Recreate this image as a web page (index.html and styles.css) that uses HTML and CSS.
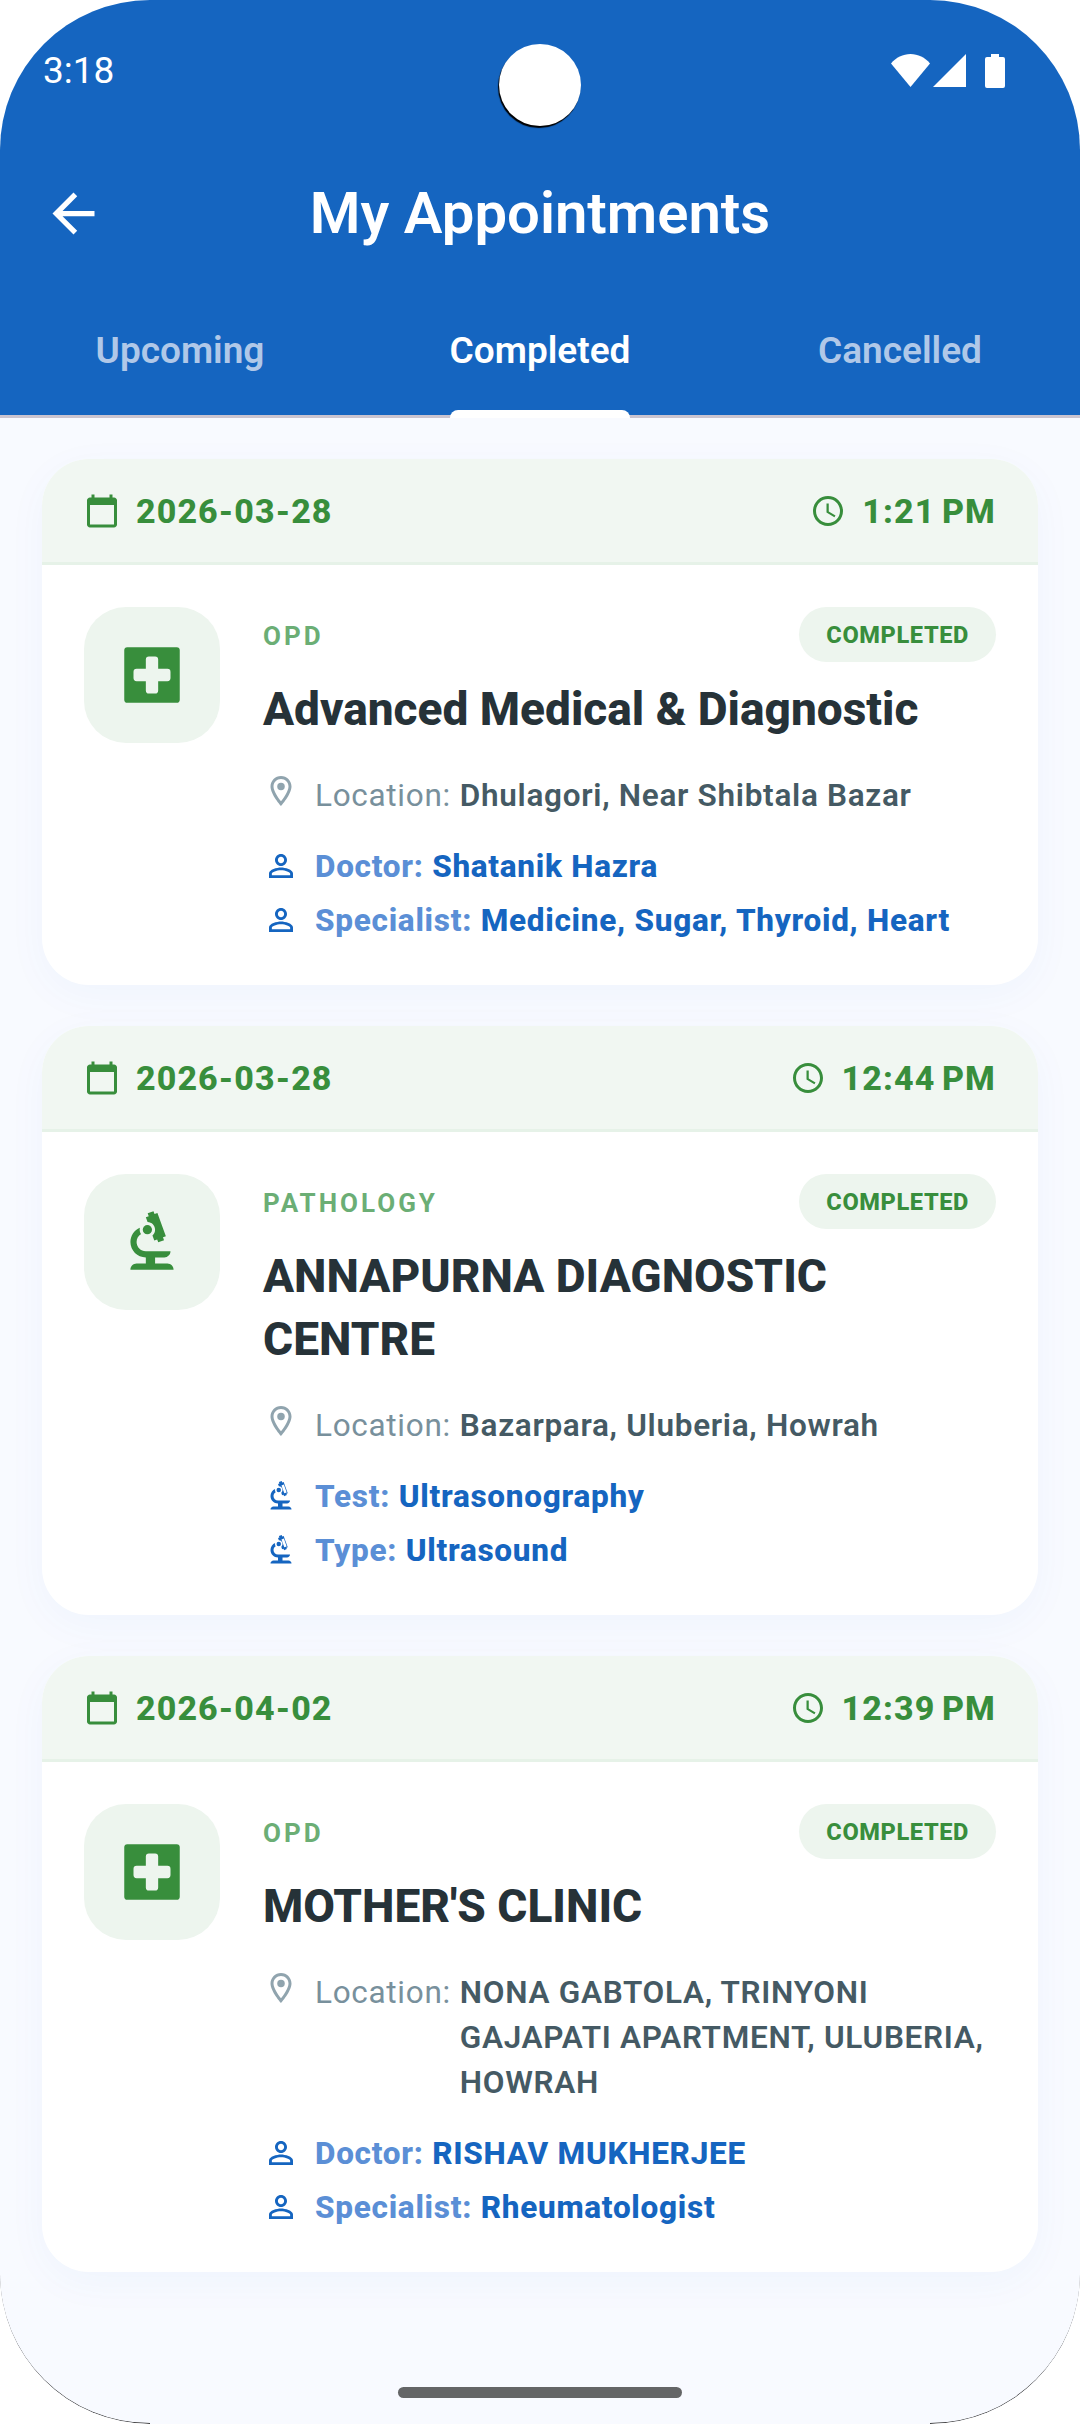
FILE: index.html
```html
<!DOCTYPE html>
<html>
<head>
  <meta http-equiv="Content-type" content="text/html; charset=utf-8">
  <title>My Appointments</title>
  <link rel="stylesheet" href="styles.css">
</head>
<body>
  <svg class="defs" width="0" height="0">
    <symbol id="i_calendar" viewBox="0 0 24 24"><path d="M20 3h-1V1h-2v2H7V1H5v2H4c-1.1 0-2 .9-2 2v16c0 1.1.9 2 2 2h16c1.1 0 2-.9 2-2V5c0-1.1-.9-2-2-2zm0 18H4V8h16v13z"/></symbol>
    <symbol id="i_clock" viewBox="0 0 24 24"><path d="M11.99 2C6.47 2 2 6.48 2 12s4.47 10 9.99 10C17.52 22 22 17.52 22 12S17.52 2 11.99 2zM12 20c-4.42 0-8-3.58-8-8s3.58-8 8-8 8 3.58 8 8-3.58 8-8 8z"/><path d="M12.5 7H11v6l5.25 3.15.75-1.23-4.5-2.67z"/></symbol>
    <symbol id="i_pin" viewBox="0 0 24 24"><path d="M12 2C8.13 2 5 5.13 5 9c0 5.25 7 13 7 13s7-7.75 7-13c0-3.87-3.13-7-7-7zM7 9c0-2.76 2.24-5 5-5s5 2.24 5 5c0 2.88-2.88 7.19-5 9.88C9.92 16.21 7 11.85 7 9z"/><circle cx="12" cy="9" r="2.5"/></symbol>
    <symbol id="i_person" viewBox="0 0 24 24"><path d="M12 5.9c1.16 0 2.1.94 2.1 2.1s-.94 2.1-2.1 2.1S9.9 9.16 9.9 8s.94-2.1 2.1-2.1m0 9c2.97 0 6.1 1.46 6.1 2.1v1.1H5.9V17c0-.64 3.13-2.1 6.1-2.1M12 4C9.79 4 8 5.79 8 8s1.79 4 4 4 4-1.79 4-4-1.79-4-4-4zm0 9c-2.67 0-8 1.34-8 4v3h16v-3c0-2.66-5.33-4-8-4z"/></symbol>
    <symbol id="i_hospital" viewBox="0 0 24 24"><path fill-rule="evenodd" d="M4 3h16a1 1 0 0 1 1 1v16a1 1 0 0 1-1 1H4a1 1 0 0 1-1-1V4a1 1 0 0 1 1-1zm7 3a1 1 0 0 0-1 1v3H7a1 1 0 0 0-1 1v2a1 1 0 0 0 1 1h3v3a1 1 0 0 0 1 1h2a1 1 0 0 0 1-1v-3h3a1 1 0 0 0 1-1v-2a1 1 0 0 0-1-1h-3V7a1 1 0 0 0-1-1z"/></symbol>
    <symbol id="i_biotech" viewBox="0 0 24 24"><path d="M7 19c-1.1 0-2 .9-2 2h14c0-1.1-.9-2-2-2h-4v-2h3c1.1 0 2-.9 2-2h-8c-1.66 0-3-1.34-3-3 0-1.09.59-2.04 1.46-2.56C8.17 9.03 8 8.54 8 8c0-.21.04-.42.09-.62C6.28 8.13 5 9.92 5 12c0 2.76 2.24 5 5 5v2H7z"/><path d="M10.56 5.51C11.91 5.54 13 6.64 13 8c0 .75-.33 1.41-.85 1.87l.59 1.62.94-.34.34.94 1.88-.68-.34-.94.94-.34-2.74-7.52-.94.34-.34-.94-1.88.68.34.94-.94.35.56 1.53z"/><circle cx="10.5" cy="8" r="1.5"/></symbol>
    <symbol id="i_biotech_line" viewBox="0 0 24 24"><path d="M7 19c-1.1 0-2 .9-2 2h14c0-1.1-.9-2-2-2h-4v-2h3c1.1 0 2-.9 2-2h-8c-1.66 0-3-1.34-3-3 0-1.09.59-2.04 1.46-2.56C8.17 9.03 8 8.54 8 8c0-.21.04-.42.09-.62C6.28 8.13 5 9.92 5 12c0 2.76 2.24 5 5 5v2H7z"/><path fill-rule="evenodd" d="M10.56 5.51C11.91 5.54 13 6.64 13 8c0 .75-.33 1.41-.85 1.87l.59 1.62.94-.34.34.94 1.88-.68-.34-.94.94-.34-2.74-7.52-.94.34-.34-.94-1.88.68.34.94-.94.35.56 1.53zM12.3 5l1.6-.6 1.9 5.2-1.6.6z"/><circle cx="10.5" cy="8" r="1.5"/></symbol>
  </svg>

  <div class="screen">
    <header class="appbar">
      <div class="status_bar">
        <span class="clock">3:18</span>
        <div class="status_icons">
          <svg class="wifi" viewBox="0 0 39 33"><path d="M0 9.500C5 3.500 12 0 19.500 0S34 3.500 39 9.500L19.500 33z"/></svg>
          <svg class="signal" viewBox="0 0 33 33"><path d="M33 0v33H0z"/></svg>
          <svg class="battery" viewBox="0 0 20 34"><path d="M6 0h8v3h4a2 2 0 0 1 2 2v27a2 2 0 0 1-2 2H2a2 2 0 0 1-2-2V5a2 2 0 0 1 2-2h4z"/></svg>
        </div>
      </div>
      <div class="camera"></div>
      <div class="toolbar">
        <svg class="back" viewBox="0 0 24 24"><path d="M20 11H7.830l5.590-5.590L12 4l-8 8 8 8 1.410-1.410L7.830 13H20v-2z"/></svg>
        <h1>My Appointments</h1>
      </div>
      <nav class="tabs">
        <div class="tab"><span class="tab_label">Upcoming</span></div>
        <div class="tab active"><span class="tab_label">Completed</span></div>
        <div class="tab"><span class="tab_label">Cancelled</span></div>
      </nav>
    </header>

    <main class="list">
      <section class="card">
        <div class="card_head">
          <div class="when"><svg class="ico"><use href="#i_calendar"/></svg>2026-03-28</div>
          <div class="when"><svg class="ico"><use href="#i_clock"/></svg>1:21 PM</div>
        </div>
        <div class="card_body">
          <div class="tile"><svg class="tile_ico"><use href="#i_hospital"/></svg></div>
          <div class="info">
            <div class="info_top">
              <span class="kind">OPD</span>
              <span class="badge">COMPLETED</span>
            </div>
            <h2>Advanced Medical &amp; Diagnostic</h2>
            <div class="loc">
              <svg class="ico"><use href="#i_pin"/></svg>
              <span class="loc_label">Location:</span>
              <span class="loc_value">Dhulagori, Near Shibtala Bazar</span>
            </div>
            <div class="line"><svg class="ico"><use href="#i_person"/></svg><span class="line_label">Doctor:</span> Shatanik Hazra</div>
            <div class="line"><svg class="ico"><use href="#i_person"/></svg><span class="line_label">Specialist:</span> Medicine, Sugar, Thyroid, Heart</div>
          </div>
        </div>
      </section>

      <section class="card">
        <div class="card_head">
          <div class="when"><svg class="ico"><use href="#i_calendar"/></svg>2026-03-28</div>
          <div class="when"><svg class="ico"><use href="#i_clock"/></svg>12:44 PM</div>
        </div>
        <div class="card_body">
          <div class="tile"><svg class="tile_ico"><use href="#i_biotech"/></svg></div>
          <div class="info">
            <div class="info_top">
              <span class="kind">PATHOLOGY</span>
              <span class="badge">COMPLETED</span>
            </div>
            <h2>ANNAPURNA DIAGNOSTIC CENTRE</h2>
            <div class="loc">
              <svg class="ico"><use href="#i_pin"/></svg>
              <span class="loc_label">Location:</span>
              <span class="loc_value">Bazarpara, Uluberia, Howrah</span>
            </div>
            <div class="line"><svg class="ico"><use href="#i_biotech_line"/></svg><span class="line_label">Test:</span> Ultrasonography</div>
            <div class="line"><svg class="ico"><use href="#i_biotech_line"/></svg><span class="line_label">Type:</span> Ultrasound</div>
          </div>
        </div>
      </section>

      <section class="card">
        <div class="card_head">
          <div class="when"><svg class="ico"><use href="#i_calendar"/></svg>2026-04-02</div>
          <div class="when"><svg class="ico"><use href="#i_clock"/></svg>12:39 PM</div>
        </div>
        <div class="card_body">
          <div class="tile"><svg class="tile_ico"><use href="#i_hospital"/></svg></div>
          <div class="info">
            <div class="info_top">
              <span class="kind">OPD</span>
              <span class="badge">COMPLETED</span>
            </div>
            <h2>MOTHER'S CLINIC</h2>
            <div class="loc">
              <svg class="ico"><use href="#i_pin"/></svg>
              <span class="loc_label">Location:</span>
              <span class="loc_value">NONA GABTOLA, TRINYONI GAJAPATI APARTMENT, ULUBERIA, HOWRAH</span>
            </div>
            <div class="line"><svg class="ico"><use href="#i_person"/></svg><span class="line_label">Doctor:</span> RISHAV MUKHERJEE</div>
            <div class="line"><svg class="ico"><use href="#i_person"/></svg><span class="line_label">Specialist:</span> Rheumatologist</div>
          </div>
        </div>
      </section>
    </main>

    <div class="home_pill"></div>
  </div>
</body>
</html>
```

FILE: styles.css
```css
* {
  box-sizing: border-box;
}
html, body {
  margin: 0;
  background-color: #fff;
}
body {
  font-family: Roboto, "Noto Sans", sans-serif;
}
.defs {
  position: absolute;
}
.screen {
  position: relative;
  width: 1080px;
  height: 2424px;
  overflow: hidden;
  background-color: #f8faff;
  border-radius: 150px;
}
/* thin dark edge on the two bottom corners */
.screen::before,
.screen::after {
  content: "";
  position: absolute;
  bottom: 0;
  width: 150px;
  height: 150px;
  border-bottom: 1px solid rgba(0, 0, 0, 0.8);
}
.screen::before {
  left: 0;
  border-bottom-left-radius: 150px;
}
.screen::after {
  right: 0;
  border-bottom-right-radius: 150px;
}

/* header */
.appbar {
  position: relative;
  background-color: #1565c0;
  border-bottom: 3px solid #cac4d0;
  color: #fff;
}
.status_bar {
  display: flex;
  align-items: center;
  justify-content: space-between;
  height: 141px;
  padding: 0 75px 0 43px;
}
.clock {
  font-size: 37px;
}
.status_icons {
  display: flex;
  align-items: center;
  gap: 3px;
}
.status_icons svg {
  display: block;
  fill: #fff;
}
.wifi {
  width: 39px;
  height: 33px;
}
.signal {
  width: 33px;
  height: 33px;
}
.battery {
  width: 20px;
  height: 34px;
  margin-left: 16px;
}
.camera {
  position: absolute;
  left: 499px;
  top: 44px;
  width: 82px;
  height: 82px;
  border-radius: 50%;
  background-color: #fff;
  box-shadow: -1px 2px 1px #000;
}
.toolbar {
  position: relative;
  display: flex;
  align-items: center;
  justify-content: center;
  height: 144px;
}
.back {
  position: absolute;
  left: 42px;
  top: 41px;
  width: 63px;
  height: 63px;
  fill: #fff;
}
h1 {
  margin: 0;
  font-size: 58px;
  font-weight: 600;
}
.tabs {
  display: flex;
  height: 130px;
}
.tab {
  flex: 1;
  display: flex;
  justify-content: center;
  font-size: 37px;
  font-weight: 600;
  color: #b0c8e8;
}
.tab_label {
  position: relative;
  display: flex;
  align-items: center;
  height: 130px;
}
.tab.active {
  color: #fff;
}
.tab.active .tab_label::after {
  content: "";
  position: absolute;
  left: 0;
  right: 0;
  bottom: -3px;
  height: 8px;
  background-color: #fff;
  border-radius: 8px 8px 0 0;
}

/* cards */
.list {
  display: flex;
  flex-direction: column;
  gap: 41px;
  padding: 41px 42px 0;
}
.card {
  background-color: #fff;
  border-radius: 47px;
  overflow: hidden;
  box-shadow: 0 10px 42px rgba(21, 101, 192, 0.04);
}
.card_head {
  display: flex;
  align-items: center;
  justify-content: space-between;
  height: 106px;
  padding: 0 42px;
  background-color: #f1f7f2;
  border-bottom: 3px solid #e6f2e8;
}
.when {
  display: flex;
  align-items: center;
  gap: 16px;
  font-size: 34px;
  font-weight: 800;
  letter-spacing: 1.1px;
  word-spacing: -3px;
  color: #388e3c;
}
.ico {
  flex: none;
  width: 36px;
  height: 36px;
  fill: currentColor;
}
.card_body {
  display: flex;
  align-items: flex-start;
  gap: 43px;
  padding: 42px;
}
.tile {
  flex: none;
  display: flex;
  align-items: center;
  justify-content: center;
  width: 136px;
  height: 136px;
  border-radius: 42px;
  background-color: #edf5ee;
}
.tile_ico {
  width: 74px;
  height: 74px;
  fill: #388e3c;
}
.info {
  flex: 1;
  min-width: 0;
}
.info_top {
  display: flex;
  align-items: center;
  justify-content: space-between;
  height: 55px;
}
.kind {
  font-size: 26px;
  font-weight: 700;
  letter-spacing: 3px;
  color: #6bae75;
  padding-top: 3px;
}
.badge {
  display: flex;
  align-items: center;
  height: 55px;
  padding: 0 27px;
  border-radius: 28px;
  background-color: #edf5ee;
  font-size: 23.6px;
  font-weight: 800;
  letter-spacing: 0.6px;
  color: #388e3c;
}
h2 {
  margin: 16px 0 32px;
  font-size: 46px;
  line-height: 63px;
  font-weight: 800;
  color: #263238;
}
.loc {
  display: flex;
  align-items: flex-start;
  font-size: 31.5px;
  line-height: 45px;
  letter-spacing: 0.7px;
  margin-bottom: 25px;
  color: #78909c;
}
.loc .ico {
  margin: 0 16px 0 0;
  color: #90a4ae;
}
.loc_label {
  flex: none;
  margin-right: 9px;
}
.loc_value {
  font-weight: 600;
  color: #455a64;
}
.line {
  display: flex;
  align-items: center;
  height: 46px;
  margin-top: 8px;
  font-size: 31.5px;
  font-weight: 800;
  letter-spacing: 0.72px;
  white-space: pre;
  color: #1565c0;
}
.line .ico {
  margin-right: 16px;
}
.line_label {
  color: #5b8fd6;
}

.home_pill {
  position: absolute;
  left: 398px;
  bottom: 26px;
  width: 284px;
  height: 11px;
  border-radius: 6px;
  background-color: #646566;
}
```
